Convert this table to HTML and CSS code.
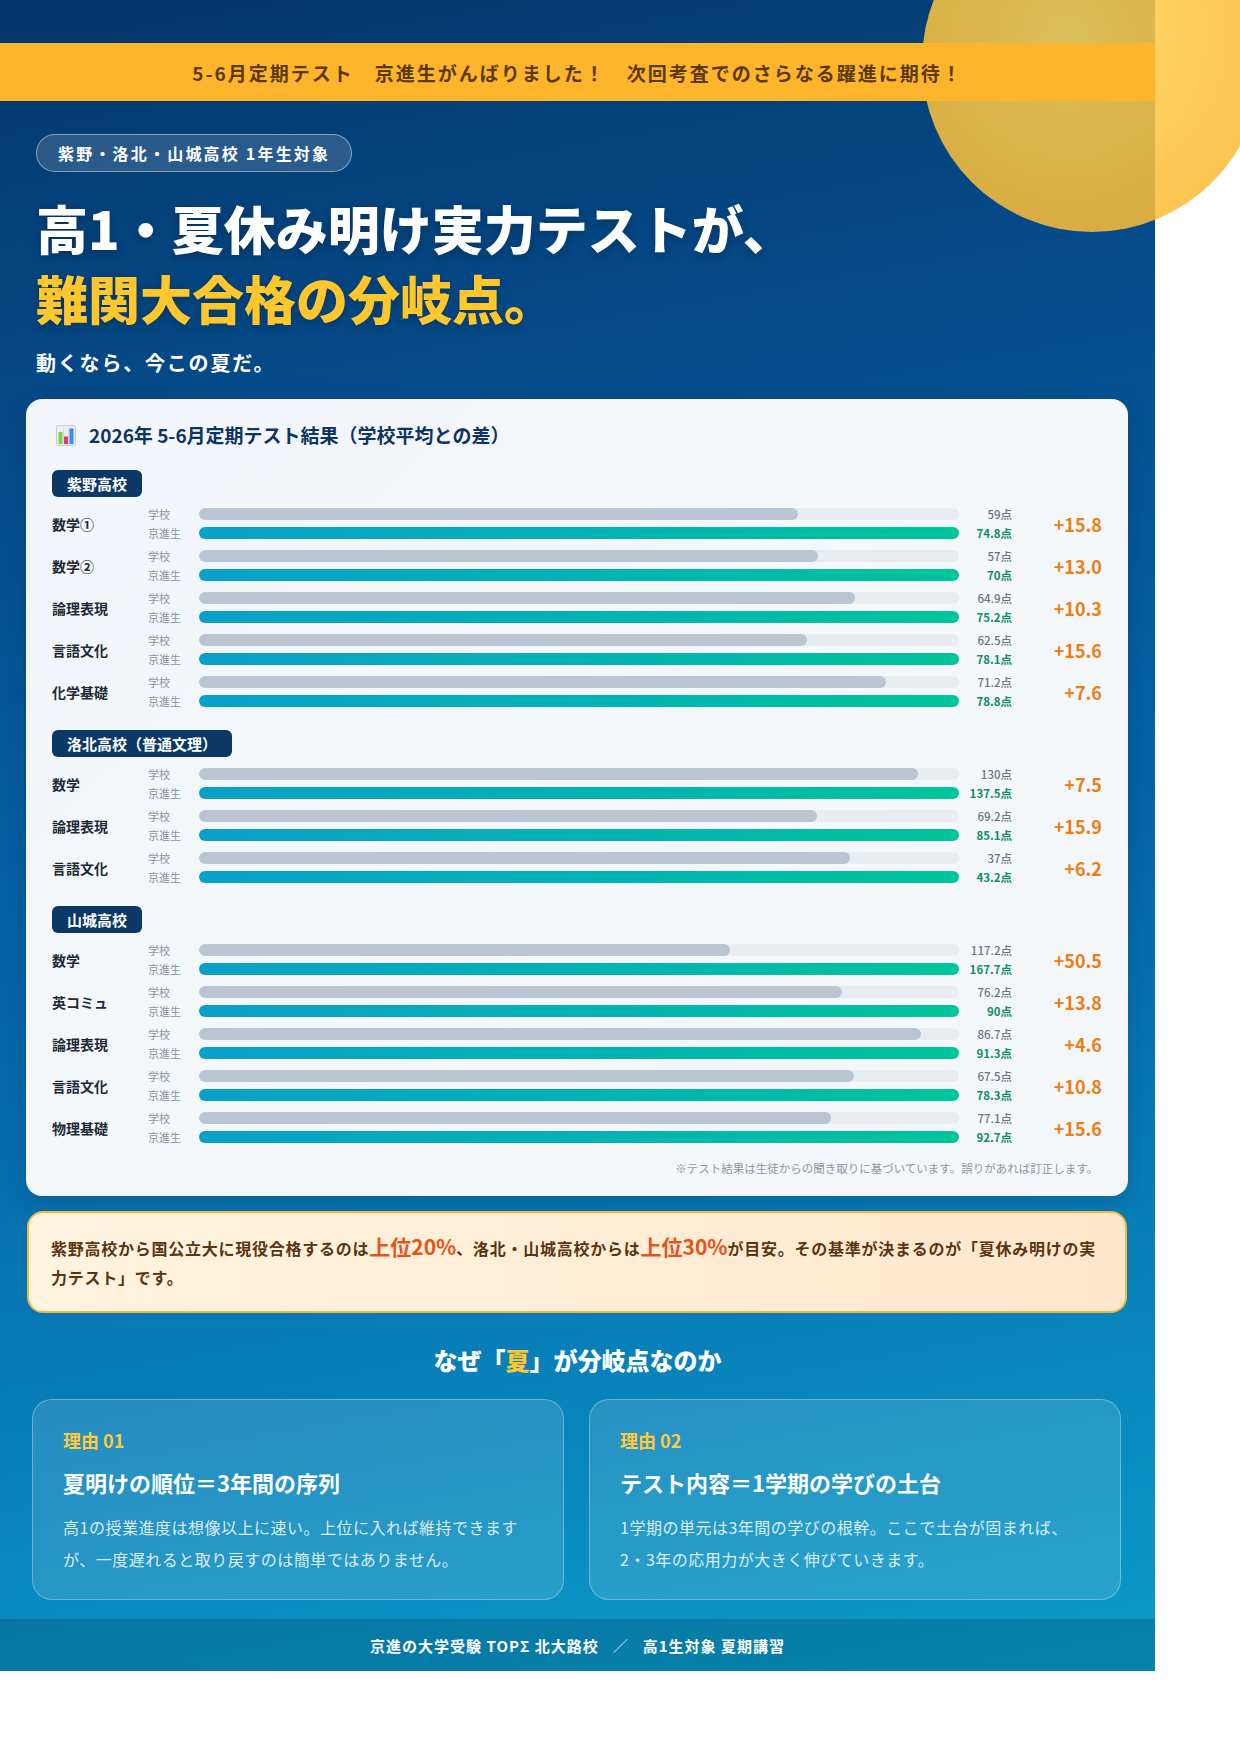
FILE: index.html
```html
<!DOCTYPE html>
<html lang="ja">
<head>
<meta charset="utf-8">
<title>高1・夏休み明け実力テスト</title>
<link rel="stylesheet" href="styles.css">
</head>
<body>
<div class="page">
<div class="poster">
  <div class="sun"></div>
  <div class="band">5-6月定期テスト　京進生がんばりました！　次回考査でのさらなる躍進に期待！</div>

  <header class="hero">
    <div class="pill">紫野・洛北・山城高校 1年生対象</div>
    <h1 class="headline">高1・夏休み明け実力テストが、<span class="accent">難関大合格の分岐点。</span></h1>
    <p class="lead">動くなら、今この夏だ。</p>
  </header>

  <section class="results">
    <h2 class="results-title">
      <svg class="chart-icon" width="20" height="21" viewBox="0 0 20 21">
        <rect x="0.5" y="0.5" width="19" height="20" rx="2" fill="#eceef4" stroke="#c6cad4"/>
        <line x1="7.5" y1="2" x2="7.5" y2="19" stroke="#d6d9e1"/>
        <line x1="12.5" y1="2" x2="12.5" y2="19" stroke="#d6d9e1"/>
        <rect x="2.5" y="7" width="4" height="12" fill="#78d24c"/>
        <rect x="8" y="11.5" width="4" height="7.5" fill="#e5336c"/>
        <rect x="13.5" y="3.5" width="4" height="15.5" fill="#3a8cf0"/>
      </svg>
      2026年 5-6月定期テスト結果（学校平均との差）
    </h2>

    <div class="school">
      <div class="school-badge">紫野高校</div>
      <div class="rows">
        <div class="row"><div class="subj">数学①</div><div class="who">学校</div><div class="track"><div class="fill" style="width:78.88%"></div></div><div class="val">59点</div><div class="diff">+15.8</div><div class="who">京進生</div><div class="bar-k"></div><div class="val k">74.8点</div></div>
        <div class="row"><div class="subj">数学②</div><div class="who">学校</div><div class="track"><div class="fill" style="width:81.43%"></div></div><div class="val">57点</div><div class="diff">+13.0</div><div class="who">京進生</div><div class="bar-k"></div><div class="val k">70点</div></div>
        <div class="row"><div class="subj">論理表現</div><div class="who">学校</div><div class="track"><div class="fill" style="width:86.30%"></div></div><div class="val">64.9点</div><div class="diff">+10.3</div><div class="who">京進生</div><div class="bar-k"></div><div class="val k">75.2点</div></div>
        <div class="row"><div class="subj">言語文化</div><div class="who">学校</div><div class="track"><div class="fill" style="width:80.03%"></div></div><div class="val">62.5点</div><div class="diff">+15.6</div><div class="who">京進生</div><div class="bar-k"></div><div class="val k">78.1点</div></div>
        <div class="row"><div class="subj">化学基礎</div><div class="who">学校</div><div class="track"><div class="fill" style="width:90.36%"></div></div><div class="val">71.2点</div><div class="diff">+7.6</div><div class="who">京進生</div><div class="bar-k"></div><div class="val k">78.8点</div></div>
      </div>
    </div>

    <div class="school">
      <div class="school-badge">洛北高校（普通文理）</div>
      <div class="rows">
        <div class="row"><div class="subj">数学</div><div class="who">学校</div><div class="track"><div class="fill" style="width:94.55%"></div></div><div class="val">130点</div><div class="diff">+7.5</div><div class="who">京進生</div><div class="bar-k"></div><div class="val k">137.5点</div></div>
        <div class="row"><div class="subj">論理表現</div><div class="who">学校</div><div class="track"><div class="fill" style="width:81.32%"></div></div><div class="val">69.2点</div><div class="diff">+15.9</div><div class="who">京進生</div><div class="bar-k"></div><div class="val k">85.1点</div></div>
        <div class="row"><div class="subj">言語文化</div><div class="who">学校</div><div class="track"><div class="fill" style="width:85.65%"></div></div><div class="val">37点</div><div class="diff">+6.2</div><div class="who">京進生</div><div class="bar-k"></div><div class="val k">43.2点</div></div>
      </div>
    </div>

    <div class="school">
      <div class="school-badge">山城高校</div>
      <div class="rows">
        <div class="row"><div class="subj">数学</div><div class="who">学校</div><div class="track"><div class="fill" style="width:69.89%"></div></div><div class="val">117.2点</div><div class="diff">+50.5</div><div class="who">京進生</div><div class="bar-k"></div><div class="val k">167.7点</div></div>
        <div class="row"><div class="subj">英コミュ</div><div class="who">学校</div><div class="track"><div class="fill" style="width:84.67%"></div></div><div class="val">76.2点</div><div class="diff">+13.8</div><div class="who">京進生</div><div class="bar-k"></div><div class="val k">90点</div></div>
        <div class="row"><div class="subj">論理表現</div><div class="who">学校</div><div class="track"><div class="fill" style="width:94.96%"></div></div><div class="val">86.7点</div><div class="diff">+4.6</div><div class="who">京進生</div><div class="bar-k"></div><div class="val k">91.3点</div></div>
        <div class="row"><div class="subj">言語文化</div><div class="who">学校</div><div class="track"><div class="fill" style="width:86.21%"></div></div><div class="val">67.5点</div><div class="diff">+10.8</div><div class="who">京進生</div><div class="bar-k"></div><div class="val k">78.3点</div></div>
        <div class="row"><div class="subj">物理基礎</div><div class="who">学校</div><div class="track"><div class="fill" style="width:83.17%"></div></div><div class="val">77.1点</div><div class="diff">+15.6</div><div class="who">京進生</div><div class="bar-k"></div><div class="val k">92.7点</div></div>
      </div>
    </div>

    <p class="footnote">※テスト結果は生徒からの聞き取りに基づいています。誤りがあれば訂正します。</p>
  </section>

  <div class="note">紫野高校から国公立大に現役合格するのは<em>上位20%</em>、洛北・山城高校からは<em>上位30%</em>が目安。その基準が決まるのが「夏休み明けの実力テスト」です。</div>

  <h2 class="why">なぜ「<span>夏</span>」が分岐点なのか</h2>

  <div class="reasons">
    <div class="reason">
      <div class="reason-no">理由 01</div>
      <h3>夏明けの順位＝3年間の序列</h3>
      <p>高1の授業進度は想像以上に速い。上位に入れば維持できます<br>が、一度遅れると取り戻すのは簡単ではありません。</p>
    </div>
    <div class="reason">
      <div class="reason-no">理由 02</div>
      <h3>テスト内容＝1学期の学びの土台</h3>
      <p>1学期の単元は3年間の学びの根幹。ここで土台が固まれば、<br>2・3年の応用力が大きく伸びていきます。</p>
    </div>
  </div>

  <footer class="footer">京進の大学受験 TOPΣ 北大路校<span class="slash">／</span>高1生対象 夏期講習</footer>
</div>
</div>
</body>
</html>
```

FILE: styles.css
```css
* {
  box-sizing: border-box;
  margin: 0;
  padding: 0;
}

html, body {
  background: #ffffff;
}

body {
  font-family: "Noto Sans CJK JP", "Noto Sans", sans-serif;
}

.page {
  width: 1240px;
  overflow: hidden;
}

.poster {
  position: relative;
  width: 1155px;
  padding-top: 43px;
  background: linear-gradient(170deg, #04366a 0%, #054f90 28%, #0563a6 52%, #0880b9 78%, #0b9dc9 100%);
}

.sun {
  position: absolute;
  left: 922px;
  top: -108px;
  width: 340px;
  height: 340px;
  border-radius: 50%;
  background: radial-gradient(circle at 42% 42%, #ffd453 0%, #fdc23d 55%, #f8b22c 100%);
  opacity: 0.86;
}

.band {
  position: relative;
  z-index: 1;
  height: 58px;
  background: #ffb52b;
  display: flex;
  align-items: center;
  justify-content: center;
  font-size: 19px;
  font-weight: 700;
  letter-spacing: 2px;
  color: #5a3a0c;
}

.hero {
  position: relative;
  z-index: 1;
  padding: 33px 36px 0;
  color: #ffffff;
}

.pill {
  display: inline-flex;
  align-items: center;
  height: 38px;
  padding: 0 21px;
  border: 1.5px solid rgba(255, 255, 255, 0.45);
  background: rgba(255, 255, 255, 0.15);
  border-radius: 19px;
  font-size: 16px;
  font-weight: 700;
  letter-spacing: 2.2px;
}

.headline {
  margin-top: 21px;
  font-size: 52px;
  line-height: 70px;
  font-weight: 900;
  text-shadow: 0 3px 10px rgba(0, 0, 0, 0.25);
}

.headline .accent {
  display: block;
  color: #ffc72c;
}

.lead {
  margin-top: 15px;
  font-size: 20px;
  line-height: 30px;
  font-weight: 700;
  letter-spacing: 1.8px;
}

.results {
  margin: 21px 27px 0 26px;
  background: linear-gradient(135deg, #f2f6fa 0%, #f4f8fb 50%, #f3f7fa 100%);
  border-radius: 16px;
  padding: 22px 26px 19px;
  box-shadow: 0 8px 24px rgba(0, 20, 50, 0.18);
}

.results-title {
  display: flex;
  align-items: center;
  gap: 13px;
  padding-left: 4px;
  font-size: 19px;
  line-height: 28px;
  font-weight: 700;
  color: #0d3462;
}

.chart-icon {
  flex: none;
}

.school {
  margin-top: 23px;
}

.results-title + .school {
  margin-top: 21px;
}

.school-badge {
  display: inline-block;
  height: 27px;
  line-height: 27px;
  padding: 0 15px;
  background: #0c3866;
  color: #ffffff;
  border-radius: 6px;
  font-size: 15px;
  font-weight: 700;
}

.rows {
  margin-top: 11px;
  display: flex;
  flex-direction: column;
  gap: 11px;
}

.row {
  display: grid;
  grid-template-columns: 96px 51px 1fr 53px 90px;
  grid-template-rows: 12px 12px;
  row-gap: 7px;
  align-items: center;
}

.subj {
  grid-column: 1;
  grid-row: 1 / 3;
  font-size: 14px;
  font-weight: 700;
  color: #1f2a37;
}

.who {
  grid-column: 2;
  font-size: 11px;
  line-height: 12px;
  color: #8a94a0;
}

.track {
  grid-column: 3;
  grid-row: 1;
  height: 12px;
  border-radius: 6px;
  background: #e8edf2;
  overflow: hidden;
}

.fill {
  height: 100%;
  border-radius: 6px;
  background: #b9c5d2;
}

.bar-k {
  grid-column: 3;
  grid-row: 2;
  height: 12px;
  border-radius: 6px;
  background: linear-gradient(90deg, #09a0c8 0%, #02b2b4 50%, #00c49a 100%);
}

.val {
  grid-column: 4;
  font-size: 11.5px;
  line-height: 12px;
  text-align: right;
  color: #6b7480;
  font-weight: 500;
}

.val.k {
  color: #128c6a;
  font-weight: 700;
}

.diff {
  grid-column: 5;
  grid-row: 1 / 3;
  text-align: right;
  font-size: 18px;
  font-weight: 700;
  color: #f07c14;
}

.footnote {
  margin-top: 16px;
  text-align: right;
  font-size: 11.5px;
  line-height: 18px;
  color: #8c96a3;
  padding-right: 4px;
}

.note {
  margin: 15px 28px 0 27px;
  border: 2px solid #f3b640;
  border-radius: 16px;
  background: linear-gradient(90deg, #fff4e0 0%, #ffe7cd 100%);
  padding: 19px 22px;
  font-size: 16px;
  line-height: 29px;
  letter-spacing: 0.75px;
  font-weight: 700;
  color: #5b3410;
}

.note em {
  font-style: normal;
  font-size: 21px;
  letter-spacing: 0;
  color: #e5541b;
}

.why {
  margin-top: 29px;
  text-align: center;
  font-size: 24px;
  line-height: 36px;
  font-weight: 900;
  color: #ffffff;
}

.why span {
  color: #ffc72c;
}

.reasons {
  margin: 21px 34px 0 32px;
  display: grid;
  grid-template-columns: 1fr 1fr;
  gap: 25px;
}

.reason {
  height: 201px;
  border: 1.5px solid rgba(255, 255, 255, 0.3);
  border-radius: 20px;
  background: rgba(255, 255, 255, 0.12);
  padding: 27px 20px 0 30px;
}

.reason-no {
  font-size: 18px;
  line-height: 27px;
  font-weight: 700;
  color: #ffc93c;
}

.reason h3 {
  margin-top: 12px;
  font-size: 22px;
  line-height: 33px;
  font-weight: 700;
  color: #ffffff;
}

.reason p {
  margin-top: 12px;
  font-size: 16px;
  line-height: 32px;
  letter-spacing: 0.5px;
  color: rgba(255, 255, 255, 0.85);
  white-space: nowrap;
}

.footer {
  margin-top: 19px;
  height: 52px;
  background: rgba(0, 40, 70, 0.22);
  display: flex;
  align-items: center;
  justify-content: center;
  font-size: 15px;
  font-weight: 700;
  letter-spacing: 1px;
  color: #ffffff;
}

.slash {
  margin: 0 14px;
  font-weight: 400;
  opacity: 0.8;
}
```
